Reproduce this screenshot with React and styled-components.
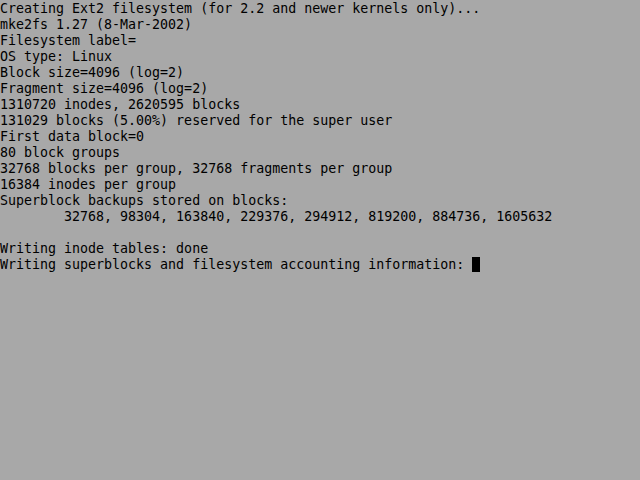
import React from 'react';
import styled, { createGlobalStyle } from 'styled-components';

const GlobalStyle = createGlobalStyle`
  html, body {
    margin: 0;
    padding: 0;
    background: #a8a8a8;
  }
`;

const Screen = styled.div`
  width: 640px;
  height: 480px;
  padding-top: 1px;
  box-sizing: border-box;
  background: #a8a8a8;
  color: #000;
  overflow: hidden;
`;

const Line = styled.div`
  font-family: "DejaVu Sans Mono", "Liberation Mono", monospace;
  font-size: 13.3px;
  line-height: 16px;
  height: 16px;
  white-space: pre;
  display: flex;
  align-items: center;
`;

const Cursor = styled.span`
  display: inline-block;
  width: 8px;
  height: 15px;
  margin-bottom: 1px;
  background: #000;
`;

const lines = [
  'Creating Ext2 filesystem (for 2.2 and newer kernels only)...',
  'mke2fs 1.27 (8-Mar-2002)',
  'Filesystem label=',
  'OS type: Linux',
  'Block size=4096 (log=2)',
  'Fragment size=4096 (log=2)',
  '1310720 inodes, 2620595 blocks',
  '131029 blocks (5.00%) reserved for the super user',
  'First data block=0',
  '80 block groups',
  '32768 blocks per group, 32768 fragments per group',
  '16384 inodes per group',
  'Superblock backups stored on blocks:',
  '        32768, 98304, 163840, 229376, 294912, 819200, 884736, 1605632',
  '',
  'Writing inode tables: done',
];

export default function App() {
  return (
    <Screen>
      <GlobalStyle />
      {lines.map((text, i) => (
        <Line key={i}>{text}</Line>
      ))}
      <Line>
        {'Writing superblocks and filesystem accounting information: '}
        <Cursor />
      </Line>
    </Screen>
  );
}
